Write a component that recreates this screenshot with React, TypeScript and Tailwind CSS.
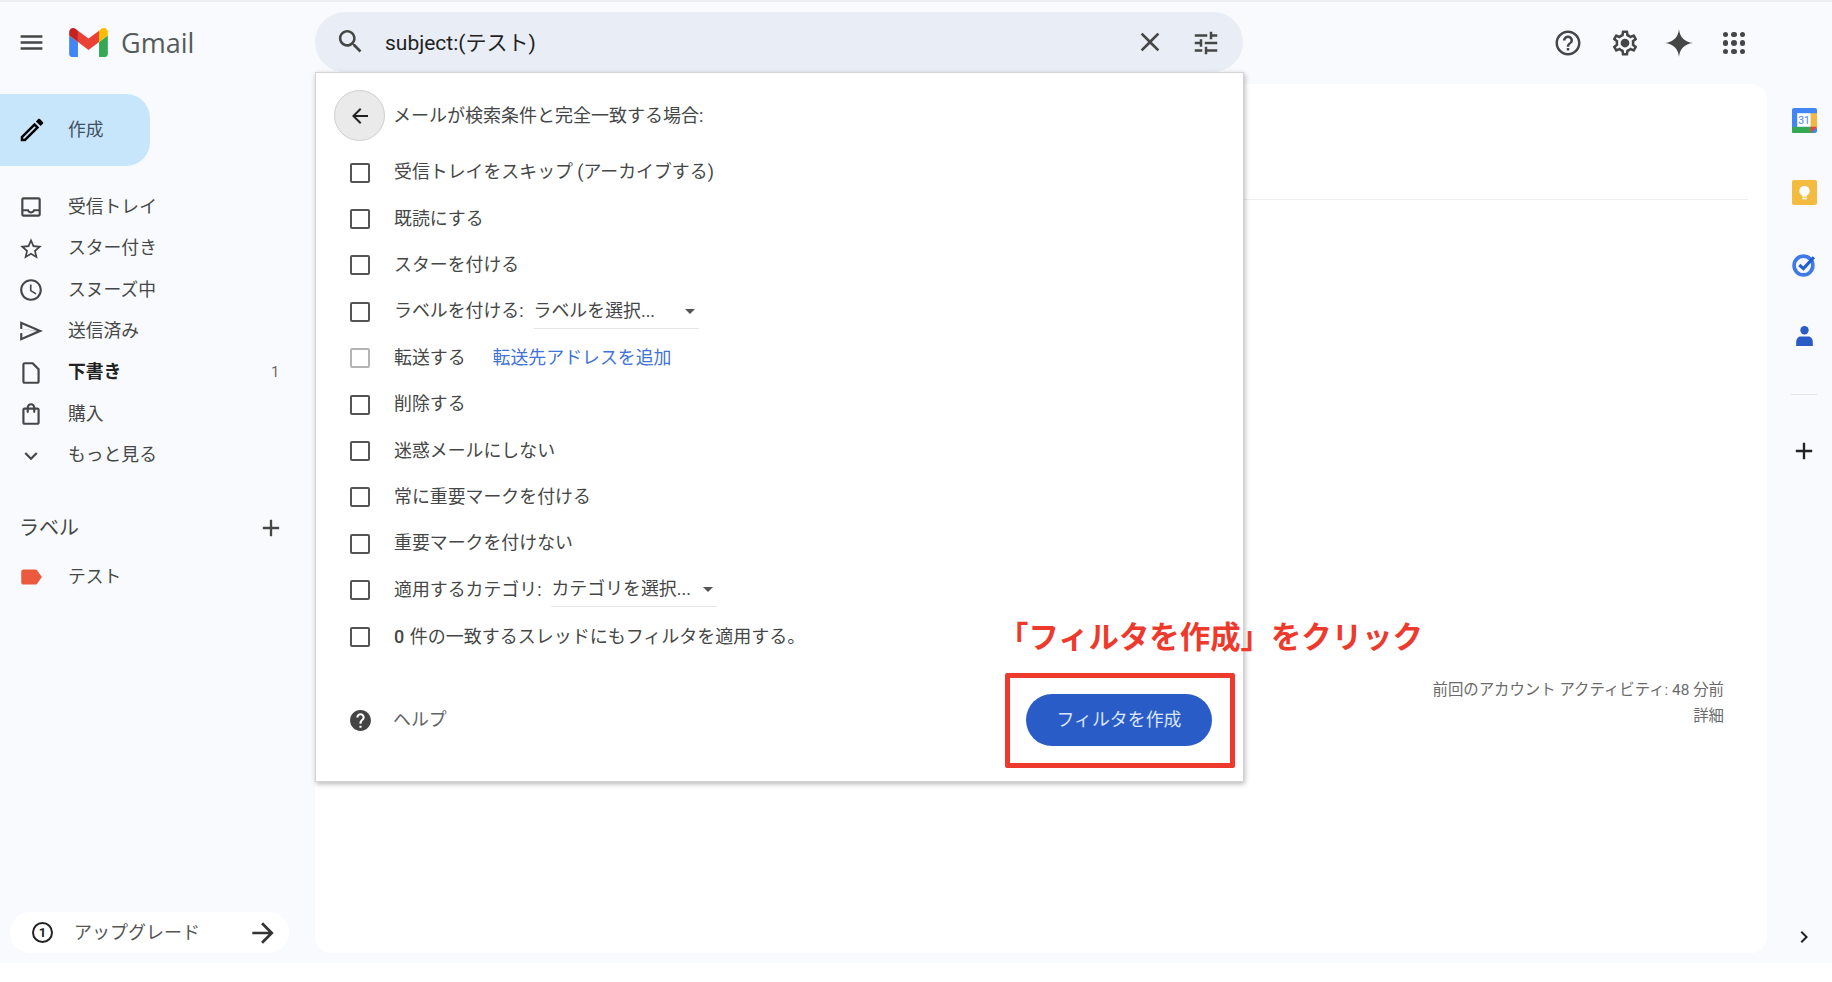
import type { ReactNode } from "react";

const font = "font-['Roboto','Noto_Sans_CJK_JP',sans-serif]";

function Icon({ d, className }: { d: string; className: string }) {
  return (
    <svg viewBox="0 0 24 24" fill="currentColor" fillRule="evenodd" className={className}>
      <path d={d} />
    </svg>
  );
}

const paths = {
  menu: "M3 18h18v-2H3v2zm0-5h18v-2H3v2zm0-7v2h18V6H3z",
  search:
    "M15.5 14h-.79l-.28-.27C15.41 12.59 16 11.11 16 9.5 16 5.91 13.09 3 9.5 3S3 5.91 3 9.5 5.91 16 9.5 16c1.61 0 3.09-.59 4.23-1.57l.27.28v.79l5 4.99L20.49 19l-4.99-5zm-6 0C7.01 14 5 11.99 5 9.5S7.01 5 9.5 5 14 7.01 14 9.5 11.99 14 9.5 14z",
  close: "M19 6.41L17.59 5 12 10.59 6.41 5 5 6.41 10.59 12 5 17.59 6.41 19 12 13.41 17.59 19 19 17.59 13.41 12z",
  tune: "M3 17v2h6v-2H3zM3 5v2h10V5H3zm10 16v-2h8v-2h-8v-2h-2v6h2zM7 9v2H3v2h4v2h2V9H7zm14 4v-2H11v2h10zm-6-4h2V7h4V5h-4V3h-2v6z",
  help: "M11 18h2v-2h-2v2zm1-16C6.48 2 2 6.48 2 12s4.48 10 10 10 10-4.48 10-10S17.52 2 12 2zm0 18c-4.41 0-8-3.59-8-8s3.59-8 8-8 8 3.59 8 8-3.59 8-8 8zm0-14c-2.21 0-4 1.79-4 4h2c0-1.1.9-2 2-2s2 .9 2 2c0 2-3 1.75-3 5h2c0-2.25 3-2.5 3-5 0-2.21-1.79-4-4-4z",
  helpFill:
    "M12 2C6.48 2 2 6.48 2 12s4.48 10 10 10 10-4.48 10-10S17.52 2 12 2zm1 17h-2v-2h2v2zm2.07-7.75l-.9.92C13.45 12.9 13 13.5 13 15h-2v-.5c0-1.1.45-2.1 1.17-2.83l1.24-1.26c.37-.36.59-.86.59-1.41 0-1.1-.9-2-2-2s-2 .9-2 2H8c0-2.21 1.79-4 4-4s4 1.79 4 4c0 .88-.36 1.68-.93 2.25z",
  gear: "M19.43 12.98c.04-.32.07-.64.07-.98 0-.34-.03-.66-.07-.98l2.11-1.65c.19-.15.24-.42.12-.64l-2-3.46c-.09-.16-.26-.25-.44-.25-.06 0-.12.01-.17.03l-2.49 1c-.52-.4-1.08-.73-1.69-.98l-.38-2.65C14.46 2.18 14.25 2 14 2h-4c-.25 0-.46.18-.49.42l-.38 2.65c-.61.25-1.17.59-1.69.98l-2.49-1c-.06-.02-.12-.03-.18-.03-.17 0-.34.09-.43.25l-2 3.46c-.13.22-.07.49.12.64l2.11 1.65c-.04.32-.07.65-.07.98 0 .33.03.66.07.98l-2.11 1.65c-.19.15-.24.42-.12.64l2 3.46c.09.16.26.25.44.25.06 0 .12-.01.17-.03l2.49-1c.52.4 1.08.73 1.69.98l.38 2.65c.03.24.24.42.49.42h4c.25 0 .46-.18.49-.42l.38-2.65c.61-.25 1.17-.59 1.69-.98l2.49 1c.06.02.12.03.18.03.17 0 .34-.09.43-.25l2-3.46c.12-.22.07-.49-.12-.64l-2.11-1.65zm-1.98-1.71c.04.31.05.52.05.73 0 .21-.02.43-.05.73l-.14 1.13.89.7 1.08.84-.7 1.21-1.27-.51-1.04-.42-.9.68c-.43.32-.84.56-1.25.73l-1.06.43-.16 1.13-.2 1.35h-1.4l-.19-1.35-.16-1.13-1.06-.43c-.43-.18-.83-.41-1.23-.71l-.91-.7-1.06.43-1.27.51-.7-1.21 1.08-.84.89-.7-.14-1.13c-.03-.31-.05-.54-.05-.74s.02-.43.05-.73l.14-1.13-.89-.7-1.08-.84.7-1.21 1.27.51 1.04.42.9-.68c.43-.32.84-.56 1.25-.73l1.06-.43.16-1.13.2-1.35h1.39l.19 1.35.16 1.13 1.06.43c.43.18.83.41 1.23.71l.91.7 1.06-.43 1.27-.51.7 1.21-1.07.85-.89.7.14 1.13zM12 8.5a3.5 3.5 0 1 0 0 7 3.5 3.5 0 0 0 0-7z",
  spark: "M12 1C12.8 7.5 16.5 11.2 23 12 16.5 12.8 12.8 16.5 12 23 11.2 16.5 7.5 12.8 1 12 7.5 11.2 11.2 7.5 12 1z",
  pencil:
    "M3 17.25V21h3.75L17.81 9.94l-3.75-3.75L3 17.25zM5.92 19H5v-.92l9.06-9.06.92.92L5.92 19zM20.71 5.63l-2.34-2.34c-.2-.2-.45-.29-.71-.29s-.51.1-.7.29l-1.83 1.83 3.75 3.75 1.83-1.83c.39-.39.39-1.02 0-1.41z",
  inbox:
    "M19 3H5c-1.1 0-2 .9-2 2v14c0 1.1.9 2 2 2h14c1.1 0 2-.9 2-2V5c0-1.1-.9-2-2-2zm0 16H5v-3h3.56c.69 1.19 1.97 2 3.45 2s2.75-.81 3.45-2H19v3zm0-5h-4.99c0 1.1-.9 2-2 2s-2-.9-2-2H5V5h14v9z",
  star: "M22 9.24l-7.19-.62L12 2 9.19 8.63 2 9.24l5.46 4.73L5.82 21 12 17.27 18.18 21l-1.63-7.03L22 9.24zM12 15.4l-3.76 2.27 1-4.28-3.32-2.88 4.38-.38L12 6.1l1.71 4.04 4.38.38-3.32 2.88 1 4.28L12 15.4z",
  clock:
    "M11.99 2C6.47 2 2 6.48 2 12s4.47 10 9.99 10C17.52 22 22 17.52 22 12S17.52 2 11.99 2zM12 20c-4.42 0-8-3.58-8-8s3.58-8 8-8 8 3.58 8 8-3.58 8-8 8zm.5-13H11v6l5.25 3.15.75-1.23-4.5-2.67z",
  send: "M2.01 3L2 10l15 2-15 2 .01 7L23 12 2.01 3zM4.01 6.03l13.5 5.79L4 10.25zM4 13.75l13.5-1.8L4 17.97z",
  draft: "M14 2H6c-1.1 0-1.99.9-1.99 2L4 20c0 1.1.89 2 1.99 2H18c1.1 0 2-.9 2-2V8l-6-6zM6 20V4h7l5 5v11H6z",
  bag: "M18 6h-2c0-2.21-1.79-4-4-4S8 3.79 8 6H6c-1.1 0-2 .9-2 2v12c0 1.1.9 2 2 2h12c1.1 0 2-.9 2-2V8c0-1.1-.9-2-2-2zm-6-2c1.1 0 2 .9 2 2h-4c0-1.1.9-2 2-2zm6 16H6V8h2v2c0 .55.45 1 1 1s1-.45 1-1V8h4v2c0 .55.45 1 1 1s1-.45 1-1V8h2v12z",
  chevron: "M7.41 8.59L12 13.17l4.59-4.58L18 10l-6 6-6-6z",
  label:
    "M17.63 5.84C17.27 5.33 16.67 5 16 5L5 5.01C3.9 5.01 3 5.9 3 7v10c0 1.1.9 1.99 2 1.99L16 19c.67 0 1.27-.33 1.63-.84L22 12l-4.37-6.16z",
  plus: "M19 13h-6v6h-2v-6H5v-2h6V5h2v6h6v2z",
  back: "M20 11H7.83l5.59-5.59L12 4l-8 8 8 8 1.41-1.41L7.83 13H20v-2z",
  forward: "M12 4l-1.41 1.41L16.17 11H4v2h12.17l-5.58 5.59L12 20l8-8z",
  right: "M8.59 16.59L13.17 12 8.59 7.41 10 6l6 6-6 6z",
};

const navItems = [
  { icon: paths.inbox, text: "受信トレイ" },
  { icon: paths.star, text: "スター付き" },
  { icon: paths.clock, text: "スヌーズ中" },
  { icon: paths.send, text: "送信済み" },
  { icon: paths.draft, text: "下書き", bold: true, count: "1" },
  { icon: paths.bag, text: "購入" },
  { icon: paths.chevron, text: "もっと見る" },
];

function GmailLogo() {
  return (
    <svg viewBox="52 42 88 66" className="h-[29px] w-[39px]">
      <path fill="#4285f4" d="M58 108h14V74L52 59v43c0 3.32 2.69 6 6 6" />
      <path fill="#34a853" d="M120 108h14c3.32 0 6-2.69 6-6V59l-20 15" />
      <path fill="#fbbc04" d="M120 48v26l20-15v-8c0-7.42-8.47-11.65-14.4-7.2" />
      <path fill="#ea4335" d="M72 74V48l24 18 24-18v26L96 92" />
      <path fill="#c5221f" d="M52 51v8l20 15V48l-5.6-4.2c-5.94-4.45-14.4-.22-14.4 7.2" />
    </svg>
  );
}

function Check({ muted }: { muted?: boolean }) {
  return (
    <span
      className={`h-[20px] w-[20px] shrink-0 rounded-[2px] border-2 ${
        muted ? "border-[#b4b4b4]" : "border-[#555]"
      }`}
    />
  );
}

function FilterRow({ children, muted }: { children: ReactNode; muted?: boolean }) {
  return (
    <div className="flex h-[46.4px] items-center text-[17.9px] text-[#444746]">
      <div className="flex w-[78px] shrink-0 justify-start pl-[34px]">
        <Check muted={muted} />
      </div>
      {children}
    </div>
  );
}

function Select({ text, w, ml }: { text: string; w: string; ml: string }) {
  return (
    <div className={`flex h-[34px] items-center justify-between border-b border-[#e6e6e6] pr-[4px] ${w} ${ml}`}>
      <span>{text}</span>
      <span className="h-0 w-0 border-x-[5px] border-t-[5px] border-x-transparent border-t-[#555]" />
    </div>
  );
}

function FilterPopup() {
  return (
    <div className="absolute left-0 top-[60px] z-10 flex h-[710px] w-[929px] flex-col border border-[#d4d4d4] bg-white shadow-[1px_2px_5px_rgba(0,0,0,0.28)]">
      <div className="flex h-[76.5px] shrink-0 items-start pl-[18px] pt-[17px]">
        <div className="flex items-center">
          <div className="mr-[8px] flex h-[51px] w-[51px] items-center justify-center rounded-full border border-[#cfcfcf] bg-[#eaeaea] text-[#222]">
            <Icon d={paths.back} className="h-[24px] w-[24px]" />
          </div>
          <span className="text-[18px] text-[#444746]">メールが検索条件と完全一致する場合:</span>
        </div>
      </div>
      <FilterRow>受信トレイをスキップ (アーカイブする)</FilterRow>
      <FilterRow>既読にする</FilterRow>
      <FilterRow>スターを付ける</FilterRow>
      <FilterRow>
        <span>ラベルを付ける:</span>
        <Select text="ラベルを選択..." w="w-[165px]" ml="ml-[10px]" />
      </FilterRow>
      <FilterRow muted>
        <span>転送する</span>
        <span className="ml-[27px] text-[#3f73d6]">転送先アドレスを追加</span>
      </FilterRow>
      <FilterRow>削除する</FilterRow>
      <FilterRow>迷惑メールにしない</FilterRow>
      <FilterRow>常に重要マークを付ける</FilterRow>
      <FilterRow>重要マークを付けない</FilterRow>
      <FilterRow>
        <span>適用するカテゴリ:</span>
        <Select text="カテゴリを選択..." w="w-[166px]" ml="ml-[10px]" />
      </FilterRow>
      <FilterRow>
        <span className="text-[18px]">
          <b className="mr-[1px] font-medium">0</b> 件の一致するスレッドにもフィルタを適用する。
        </span>
      </FilterRow>
      <div className="mt-[34.5px] flex h-[52px] items-center justify-between pl-[32px] pr-[31px]">
        <div className="flex items-center text-[17.9px] text-[#5f6368]">
          <Icon d={paths.helpFill} className="mr-[20px] h-[25px] w-[25px] text-[#444]" />
          ヘルプ
        </div>
        <button className="flex h-[52px] w-[186px] items-center justify-center rounded-full bg-[#2a5cc8] text-[17.9px] text-[#dbe6fb]">
          フィルタを作成
        </button>
      </div>
    </div>
  );
}

function Header() {
  return (
    <header className="flex h-[82px] shrink-0 items-start pt-[10px]">
      <div className="flex h-[60px] w-[315px] shrink-0 items-center">
        <Icon d={paths.menu} className="ml-[17px] h-[29px] w-[29px] text-[#444746]" />
        <div className="ml-[23px]">
          <GmailLogo />
        </div>
        <span className="ml-[13px] text-[27px] leading-none text-[#555a5e] font-['Open_Sans',sans-serif]">Gmail</span>
      </div>
      <div className="relative flex h-[60px] w-[928px] shrink-0 items-center rounded-[30px] bg-[#e9eef6]">
        <Icon d={paths.search} className="ml-[20px] mt-[-1px] h-[31px] w-[31px] text-[#444746]" />
        <span className="ml-[19px] mt-[3px] flex-1 text-[21px] text-[#222]">subject:(テスト)</span>
        <Icon d={paths.close} className="mr-[25px] h-[32px] w-[32px] text-[#444746]" />
        <Icon d={paths.tune} className="mr-[22px] mt-[1px] h-[30px] w-[30px] text-[#444746]" />
        <FilterPopup />
      </div>
      <div className="flex h-[62px] flex-1 items-center justify-end pr-[87px] text-[#444746]">
        <Icon d={paths.help} className="h-[30px] w-[30px]" />
        <Icon d={paths.gear} className="ml-[27px] h-[30px] w-[30px]" />
        <Icon d={paths.spark} className="ml-[24px] h-[30px] w-[30px]" />
        <div className="ml-[29px] grid h-[22px] w-[22px] grid-cols-3 gap-[3px]">
          {[1, 2, 3, 4, 5, 6, 7, 8, 9].map((n) => (
            <span key={n} className="rounded-full bg-[#444746]" />
          ))}
        </div>
      </div>
    </header>
  );
}

function Sidebar() {
  return (
    <aside className="flex h-[869px] w-[315px] shrink-0 flex-col text-[17.8px] text-[#444746]">
      <div className="mt-[10px] flex h-[72px] w-[150px] items-center rounded-r-[24px] bg-[#c8e6fb]">
        <Icon d={paths.pencil} className="ml-[17px] h-[30px] w-[30px] text-black" />
        <span className="ml-[21px] text-[#3f4f5f]">作成</span>
      </div>
      <nav className="mt-[20.5px] flex w-[289px] flex-col">
        {navItems.map((item) => (
          <div key={item.text} className="flex h-[41.4px] items-center">
            <Icon d={item.icon} className="ml-[18px] h-[26px] w-[26px] text-[#444746]" />
            <span className={`ml-[24px] flex-1 ${item.bold ? "font-bold text-[#222]" : ""}`}>{item.text}</span>
            {item.count && <span className="mr-[10px] text-[14px] text-[#666]">{item.count}</span>}
          </div>
        ))}
      </nav>
      <div className="mt-[36.5px] flex w-[289px] items-center justify-between pl-[19px] pr-[4px]">
        <span className="text-[20px]">ラベル</span>
        <Icon d={paths.plus} className="h-[28px] w-[28px]" />
      </div>
      <div className="mt-[14px] flex h-[41.4px] items-center">
        <Icon d={paths.label} className="ml-[18px] h-[26px] w-[26px] text-[#eb5a3e]" />
        <span className="ml-[24px]">テスト</span>
      </div>
      <div className="ml-[10px] mt-auto flex h-[41px] w-[279px] items-center rounded-full bg-white">
        <span className="ml-[22px] flex h-[21px] w-[21px] items-center justify-center rounded-full border-2 border-[#222] text-[13px] font-bold leading-none text-[#222]">
          1
        </span>
        <span className="ml-[21px] flex-1 text-[18px] text-[#555]">アップグレード</span>
        <Icon d={paths.forward} className="mr-[10px] h-[32px] w-[32px] text-[#333]" />
      </div>
    </aside>
  );
}

function Rail() {
  return (
    <aside className="flex flex-1 flex-col items-center pl-[9px] pt-[24px]">
      <svg viewBox="0 0 24 24" className="h-[25px] w-[25px]">
        <rect x="0" y="0" width="24" height="24" rx="2" fill="#4285f4" />
        <rect x="18" y="5" width="6" height="14" fill="#f4b73f" />
        <rect x="0" y="18" width="20" height="6" rx="1" fill="#34a853" />
        <path d="M18 24v-6h6z" fill="#ea4335" />
        <rect x="5" y="5" width="13" height="13" fill="#fff" />
        <text x="11.5" y="15.5" fontSize="10" fontFamily="Roboto" textAnchor="middle" fill="#4285f4">
          31
        </text>
      </svg>
      <svg viewBox="0 0 24 24" className="mt-[47px] h-[25px] w-[25px]">
        <rect width="24" height="24" rx="2" fill="#f4bb41" />
        <circle cx="12" cy="10.5" r="5" fill="#fff" />
        <rect x="9.8" y="14" width="4.4" height="2" fill="#fff" />
        <rect x="9.8" y="17" width="4.4" height="1.5" fill="#fff" />
      </svg>
      <svg viewBox="0 0 24 24" className="mt-[47px] h-[25px] w-[25px]">
        <circle cx="11" cy="13" r="9" fill="none" stroke="#3f7ae8" strokeWidth="3.5" />
        <path d="M7 12.5l4 3.5 10-11" fill="none" stroke="#1f5fd0" strokeWidth="3" />
      </svg>
      <svg viewBox="0 0 24 24" className="mt-[47px] h-[25px] w-[25px]">
        <circle cx="12" cy="6" r="4" fill="#2a5cc8" />
        <path d="M4 21v-3c0-4 2-6 4-6h8c2 0 4 2 4 6v3z" fill="#2a5cc8" />
      </svg>
      <div className="mt-[45px] h-px w-[26px] bg-[#e3e5e8]" />
      <Icon d={paths.plus} className="mt-[42px] h-[28px] w-[28px] text-[#222]" />
      <Icon d={paths.right} className="mt-[460px] h-[24px] w-[24px] text-[#222]" />
    </aside>
  );
}

function MainCard() {
  return (
    <main className="flex h-[869px] w-[1452px] shrink-0 flex-col rounded-[16px] bg-white">
      <div className="ml-[928px] mt-[115px] h-px w-[505px] bg-[#eceef0]" />
      <div className="mt-[477px] flex flex-col items-end pr-[43px] text-[15.4px] leading-[26px] text-[#6b6b6b]">
        <span>前回のアカウント アクティビティ: 48 分前</span>
        <span>詳細</span>
      </div>
    </main>
  );
}

export default function App() {
  return (
    <div className={`relative flex h-[982px] w-[1832px] flex-col overflow-hidden bg-white ${font}`}>
      <div className="h-[2px] shrink-0 bg-[#eceef2]" />
      <div className="flex h-[961px] shrink-0 flex-col bg-[#f8fafd]">
        <Header />
        <div className="flex flex-1">
          <Sidebar />
          <MainCard />
          <Rail />
        </div>
      </div>

      {/* annotation over the screenshot */}
      <div className="absolute left-[1005px] top-[673px] z-20 h-[95px] w-[230px] rounded-[2px] border-[5.5px] border-[#ee3a2c]" />
      <div className="absolute left-[998px] top-[616px] z-20 whitespace-nowrap text-[30.4px] font-bold leading-[44px] text-[#ee3a2c]">
        「フィルタを作成」をクリック
      </div>
    </div>
  );
}
